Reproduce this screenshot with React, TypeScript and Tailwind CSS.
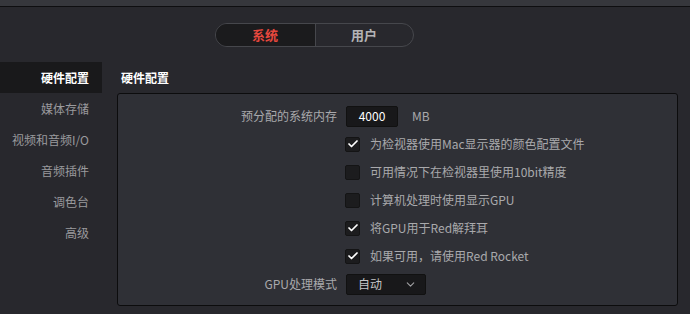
import { Check, ChevronDown } from 'lucide-react';

const font = { fontFamily: '"Noto Sans CJK SC", "Noto Sans", sans-serif' };

const sidebarItems = ['硬件配置', '媒体存储', '视频和音频I/O', '音频插件', '调色台', '高级'];

const checkRows = [
  { label: '为检视器使用Mac显示器的颜色配置文件', checked: true },
  { label: '可用情况下在检视器里使用10bit精度', checked: false },
  { label: '计算机处理时使用显示GPU', checked: false },
  { label: '将GPU用于Red解拜耳', checked: true },
  { label: '如果可用，请使用Red Rocket', checked: true },
];

function CheckBox({ checked }: { checked: boolean }) {
  return (
    <div className="w-[15px] h-[15px] rounded-[2px] bg-[#1c1c1e] border border-[#141415] flex items-center justify-center">
      {checked && <Check size={12} strokeWidth={3.5} className="text-white" />}
    </div>
  );
}

export default function App() {
  return (
    <div className="w-[690px] h-[314px] bg-[#28282d] text-[12px] overflow-hidden flex flex-col" style={font}>
      <div className="h-[6px] bg-[#36373c] border-b border-[#0e0e10] box-content" />

      <div className="flex justify-center pt-[16px] h-[55px]">
        <div className="flex h-[24px] w-[199px] rounded-full border border-[#46474c] overflow-hidden ml-[-62px]">
          <div className="w-[100px] bg-[#1b1b1d] flex items-center justify-center text-[#e5473d] font-bold text-[13px] border-r border-[#46474c]">
            系统
          </div>
          <div className="flex-1 flex items-center justify-center text-[#b4b4b6] font-bold text-[13px]">
            用户
          </div>
        </div>
      </div>

      <div className="flex flex-1">
        <div className="w-[102px] flex flex-col">
          {sidebarItems.map((item, i) => (
            <div
              key={item}
              className={
                'h-[31px] pr-[13px] flex items-center justify-end ' +
                (i === 0 ? 'bg-[#19191b] text-white font-bold' : 'text-[#9a9a9d]')
              }
            >
              {item}
            </div>
          ))}
        </div>

        <div className="ml-[15px] w-[561px] flex flex-col">
          <div className="h-[31px] flex items-center pl-[4px] text-white font-bold">硬件配置</div>
          <div className="h-[213px] bg-[#2f3036] border border-[#0c0c0d] rounded-[3px] pt-[12px]">
            <div className="flex items-center h-[20px]">
              <div className="w-[219px] text-right text-[#a9a9ac]">预分配的系统内存</div>
              <div className="ml-[9px] w-[52px] h-[21px] bg-[#18181a] border border-[#111] rounded-[2px] flex items-center justify-center text-white">
                4000
              </div>
              <div className="ml-[14px] text-[#a9a9ac]">MB</div>
            </div>
            <div className="mt-[4px] flex flex-col">
              {checkRows.map((r) => (
                <div key={r.label} className="h-[28px] flex items-center pl-[227px]">
                  <CheckBox checked={r.checked} />
                  <span className="ml-[10px] text-[#a9a9ac]">{r.label}</span>
                </div>
              ))}
            </div>
            <div className="flex items-center h-[22px] mt-[3px]">
              <div className="w-[219px] text-right text-[#a9a9ac]">GPU处理模式</div>
              <div className="ml-[9px] w-[80px] h-[21px] bg-[#18181a] border border-[#111] rounded-[2px] flex items-center justify-between pl-[11px] pr-[8px] text-[#c4c4c6]">
                <span>自动</span>
                <ChevronDown size={13} strokeWidth={2} className="text-[#a0a0a3]" />
              </div>
            </div>
          </div>
        </div>
      </div>
    </div>
  );
}
